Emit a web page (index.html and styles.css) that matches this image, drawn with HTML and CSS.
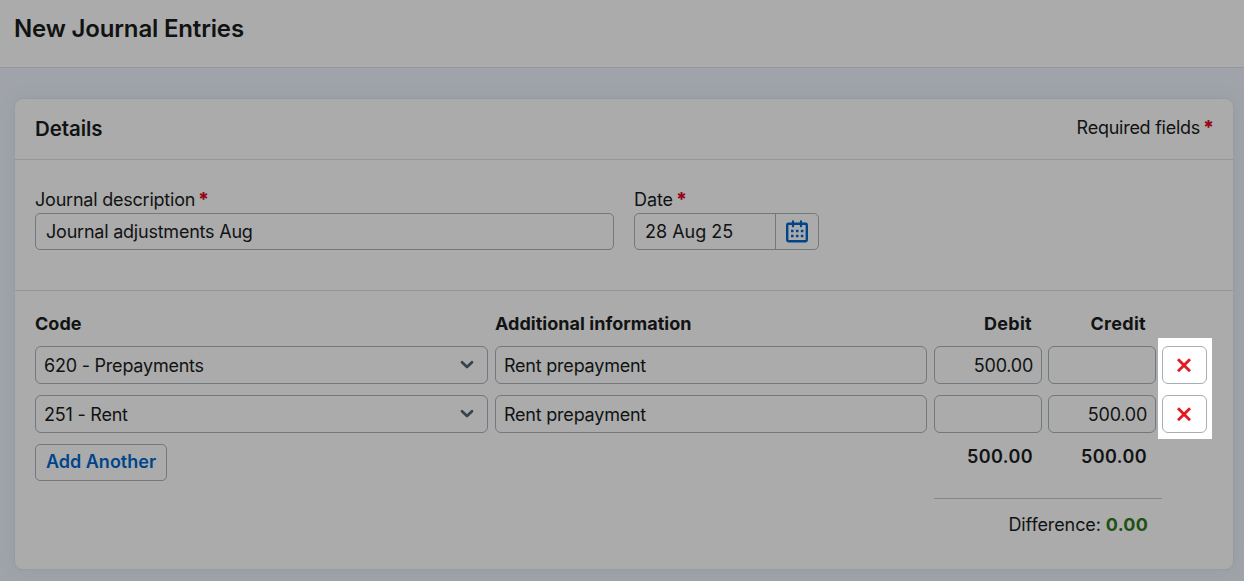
FILE: index.html
```html
<!DOCTYPE html>
<html lang="en">
<head>
<meta charset="utf-8">
<title>New Journal Entries</title>
<link rel="stylesheet" href="styles.css">
</head>
<body>
<header class="page-header"><h1 class="page-title">New Journal Entries</h1></header>
<main class="content">
  <section class="card">
    <div class="card-header">
      <h2 class="card-title">Details</h2>
      <span class="required-note">Required fields <b class="star">*</b></span>
    </div>
    <div class="details">
      <div class="description">
        <label class="label">Journal description <b class="star">*</b></label>
        <div class="input">Journal adjustments Aug</div>
      </div>
      <div class="date">
        <label class="label date-label">Date <b class="star">*</b></label>
        <div class="input date-input">
          <span class="date-value">28 Aug 25</span>
          <span class="calendar">
            <svg width="22" height="24" viewBox="0 0 22 24" fill="none" stroke="currentColor">
              <rect x="1.2" y="3.7" width="19.6" height="17.6" rx="1.2" stroke-width="2.4"/>
              <path d="M7 1.3v5M15 1.3v5" stroke-width="2.2" stroke-linecap="round"/>
              <path d="M5 11h12.6M5 16h12.6" stroke-width="2.6" stroke-dasharray="2.6 2.3"/>
            </svg>
          </span>
        </div>
      </div>
    </div>
    <div class="entries">
      <div class="row head">
        <span>Code</span><span>Additional information</span><span class="num">Debit</span><span class="num">Credit</span>
      </div>
      <div class="lines">
        <div class="row">
          <div class="cell select">620 - Prepayments<svg class="chevron" width="14" height="10" viewBox="0 0 14 10"><path d="M2 2.2l5 4.8 5-4.8"/></svg></div>
          <div class="cell">Rent prepayment</div>
          <div class="cell num">500.00</div>
          <div class="cell num"></div>
          <button class="remove" aria-label="Remove"><svg width="14" height="14" viewBox="0 0 14 14"><path d="M2 2.2l10 10M12 2.2L2 12.2"/></svg></button>
        </div>
        <div class="row">
          <div class="cell select">251 - Rent<svg class="chevron" width="14" height="10" viewBox="0 0 14 10"><path d="M2 2.2l5 4.8 5-4.8"/></svg></div>
          <div class="cell">Rent prepayment</div>
          <div class="cell num"></div>
          <div class="cell num">500.00</div>
          <button class="remove" aria-label="Remove"><svg width="14" height="14" viewBox="0 0 14 14"><path d="M2 2.2l10 10M12 2.2L2 12.2"/></svg></button>
        </div>
      </div>
      <div class="row totals">
        <button class="add">Add Another</button><span></span><span class="total">500.00</span><span class="total">500.00</span>
      </div>
      <div class="difference">Difference:<b class="zero">0.00</b></div>
    </div>
  </section>
</main>
</body>
</html>
```
FILE: styles.css
```css
* { box-sizing: border-box; }
body {
  margin: 0;
  height: 581px;
  overflow: hidden;
  background: #a0a4aa;
  color: #111313;
  font: 18px/24px Inter, "Liberation Sans", sans-serif;
  letter-spacing: -.22px;
}
h1, h2 { margin: 0; font-weight: 600; }
span { white-space: nowrap; }
button { margin: 0; padding: 0; font: inherit; }
svg { display: block; flex: none; }

.page-header { height: 68px; padding: 13px 14px; background: #ababab; border-bottom: 1px solid #94989c; }
.page-title { font-size: 24px; line-height: 32px; letter-spacing: -.17px; }

.content { padding: 30px 10px 11px 14px; }
.card {
  width: 1220px;
  height: 472px;
  background: #ababab;
  border: 1px solid #989ca2;
  border-radius: 9px;
  box-shadow: 0 0 16px rgba(75, 95, 120, .12);
}
.card-header {
  display: flex; justify-content: space-between; align-items: center;
  height: 61px; padding: 0 20px; border-bottom: 1px solid #94989a;
}
.card-title { font-size: 20.5px; letter-spacing: -.1px; }
.required-note { padding-bottom: 2px; letter-spacing: -.25px; }
.star { margin-left: -2px; color: #950515; font-weight: 800; font-size: 19px; line-height: 1; letter-spacing: -1px; }

.details { display: flex; gap: 20px; height: 131px; padding: 28px 20px 0; border-bottom: 1px solid #94989a; }
.label { display: block; height: 25px; }
.date-label { letter-spacing: -.1px; }
.description { width: 579px; }
.date { width: 185px; }
.input {
  display: flex; align-items: center; height: 37px; padding-left: 10px;
  border: 1px solid #72787c; border-radius: 5px;
}
.date-input { justify-content: space-between; letter-spacing: 0; }
.calendar {
  display: flex; align-items: center; justify-content: center;
  width: 43px; height: 35px; border-left: 1px solid #72787c; color: #00458a;
}

.entries { padding: 21px 20px 0; }
.row { display: grid; grid-template-columns: 453px 7px 432px 7px 108px 6px 108px 6px 45px; }
.row > :nth-child(2) { grid-column: 3; }
.row > :nth-child(3) { grid-column: 5; }
.row > :nth-child(4) { grid-column: 7; }
.row > :nth-child(5) { grid-column: 9; }
.head { height: 26px; font-weight: 700; letter-spacing: .03px; }
.num { text-align: right; justify-content: flex-end; }
.head .num { padding-right: 10px; letter-spacing: .3px; }
.lines {
  display: grid; row-gap: 11px; margin-right: -20px; padding: 8px 0 6px;
  background: linear-gradient(#fff, #fff) 1123px 0 / 54px 100% no-repeat;
}
.cell {
  display: flex; align-items: center; height: 38px; padding: 2px 8px 0;
  border: 1px solid #72787c; border-radius: 6px;
}
.cell.num { letter-spacing: -.25px; }
.select { justify-content: space-between; padding-right: 13px; }
.chevron { margin-bottom: 2px; fill: none; stroke: #35434b; stroke-width: 2.7; stroke-linecap: round; stroke-linejoin: round; }
.remove {
  display: flex; align-items: center; justify-content: center; height: 38px;
  background: #fff; border: 1px solid #a5afb5; border-radius: 6px;
}
.remove path { stroke: #e21b22; stroke-width: 2.9; stroke-linecap: square; fill: none; }
.remove svg { margin-right: 1px; }
.totals { margin-top: 5px; height: 54px; }
.add {
  width: 132px; height: 37px; padding-bottom: 2px; background: #ababab;
  border: 1px solid #72787c; border-radius: 5px; color: #00458a; font-weight: 600; letter-spacing: 0;
}
.total { padding: 1px 9px 0 0; text-align: right; font-weight: 600; letter-spacing: .4px; }
.difference {
  display: flex; justify-content: flex-end; gap: 5px; width: 228px;
  margin-left: 899px; padding: 14px 14px 0 0; border-top: 1px solid #818689; letter-spacing: -.1px;
}
.zero { color: #205014; font-weight: 700; letter-spacing: .2px; }
```
